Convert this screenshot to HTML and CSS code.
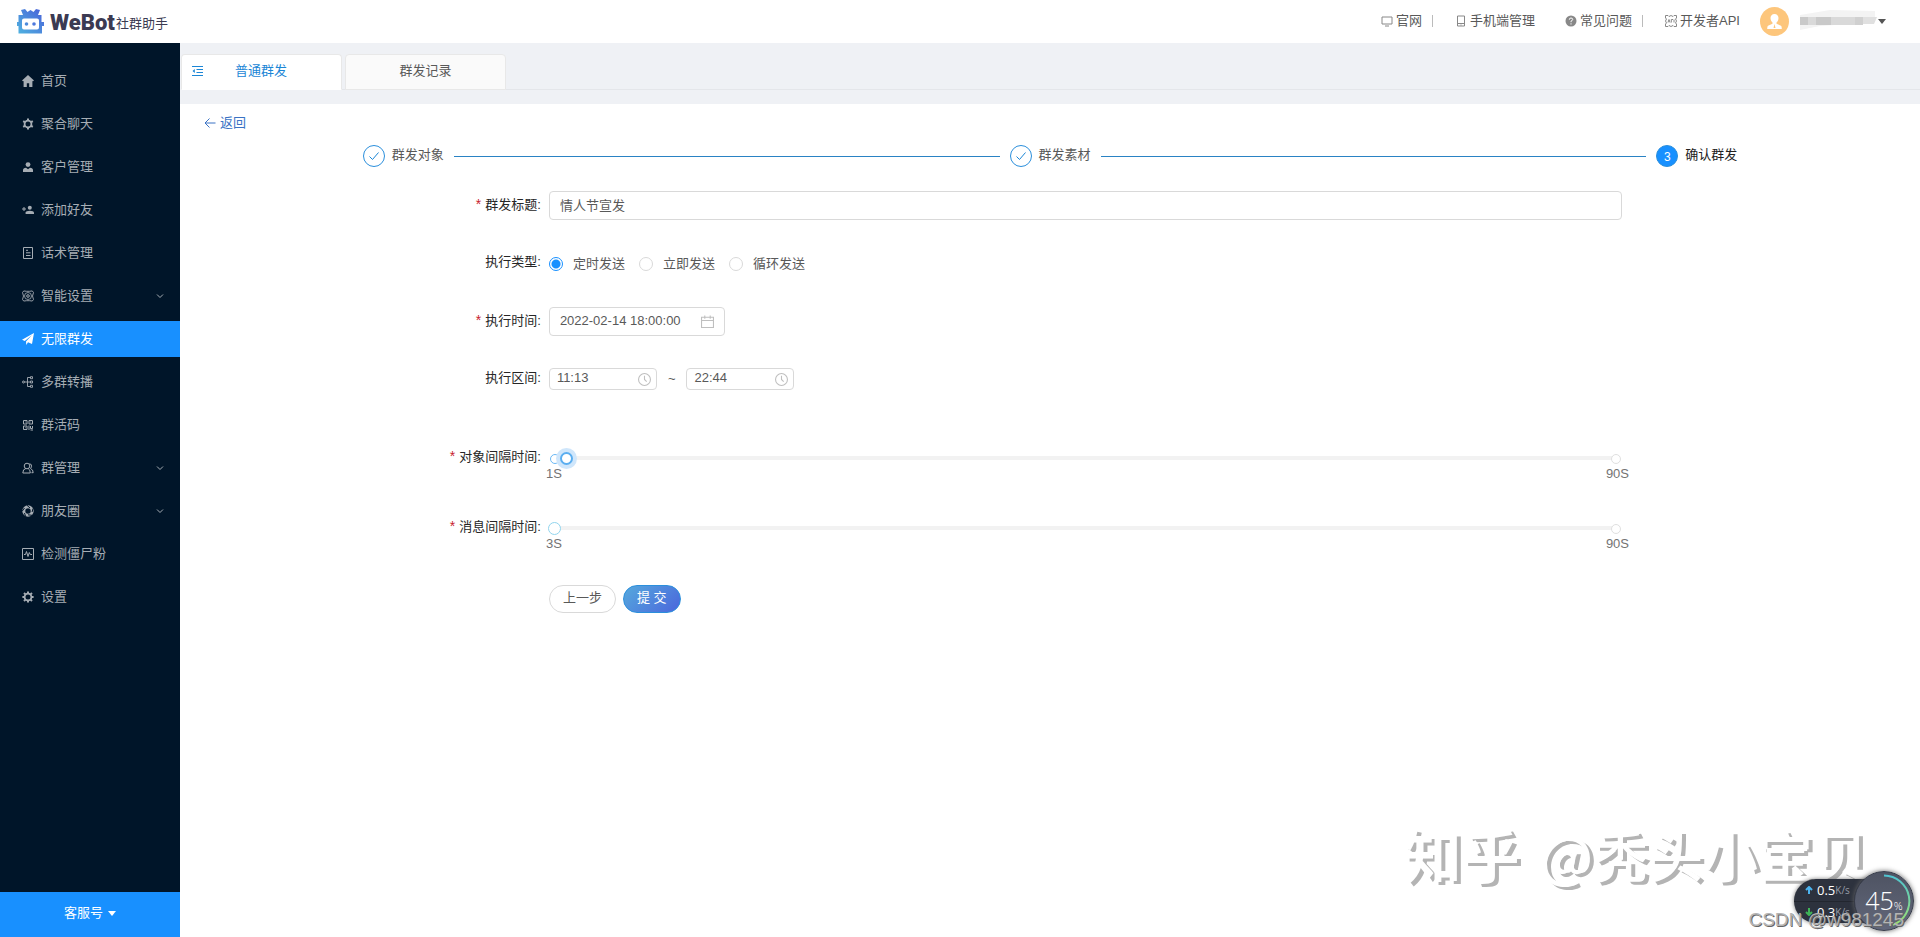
FILE: index.html
```html
<!DOCTYPE html>
<html lang="zh-CN">
<head>
<meta charset="utf-8">
<title>WeBot社群助手</title>
<link rel="stylesheet" href="styles.css">
</head>
<body>
<header class="topbar">
  <a class="logo" href="#">
    <svg class="logo-mark" viewBox="0 0 27 25" aria-hidden="true">
      <defs><linearGradient id="lg" x1="0" y1="1" x2="1" y2="0"><stop offset="0" stop-color="#4fb4e0"/><stop offset="1" stop-color="#4a5fd8"/></linearGradient></defs>
      <path fill="url(#lg)" d="M4 1l4-1 2.500 3L13.500 1l3 2L19 0l4 1-2 5h3.500v7H27v4h-2v7.500H1.500V17H0v-4h1.500V6H6zM7 9.500q-2 0-2 2v7q0 2 2 2h13q2 0 2-2v-7q0-2-2-2z"/>
      <circle cx="9.500" cy="15" r="1.800" fill="#4d8bdc"/><circle cx="17" cy="15" r="1.800" fill="#4d78dc"/>
    </svg>
    <strong class="logo-name">WeBot</strong><span class="logo-sub">社群助手</span>
  </a>
  <nav class="toplinks">
    <a class="toplink ruled" href="#"><svg class="ti" viewBox="0 0 12 12"><path d="M1 2h10v7H1zM4 11h4"/></svg>官网</a>
    <a class="toplink" href="#"><svg class="ti" viewBox="0 0 12 12"><path d="M2.500 1h7v10h-7zM2.500 8.500h7M5.500 10h1"/></svg>手机端管理</a>
    <a class="toplink ruled apart" href="#"><svg class="ti" viewBox="0 0 12 12"><circle cx="6" cy="6" r="5.500" fill="#888" stroke="none"/><path class="inv" d="M4.300 4.700q0-1.700 1.700-1.700t1.700 1.500q0 .9-1.700 1.700v1M6 8.300v1.200"/></svg>常见问题</a>
    <a class="toplink" href="#"><svg class="ti" viewBox="0 0 12 12"><path d="M.5 3V.5H3L4 1.500 6 .5l2 1 1-1h2.500V3l-1 1 1 2-1 2 1 1v2.500H9l-1-1-2 1-2-1-1 1H.5V9l1-1-1-2 1-2zM3 7.500l1-3 1 3M6.300 7.500v-3H8M9 4.500v3"/></svg>开发者API</a>
  </nav>
  <button class="account" aria-label="账户">
    <svg class="avatar" viewBox="0 0 29 29"><circle cx="14.500" cy="14.500" r="14.500" fill="#fdc67c"/><path fill="#fff" d="M14.500 7c2.500 0 4 1.700 4 4 0 1.900-1 3.700-2 4.500v1.300l4.500 1.900q.8.500.8 3.300H7.200q0-2.800.8-3.300l4.500-1.900v-1.300c-1-.8-2-2.600-2-4.500 0-2.300 1.500-4 4-4z"/><path d="M14.500 17l-1 4h2z" fill="#fdc67c"/></svg>
    <svg class="masked" viewBox="0 0 78 24"><path fill="#f3f3f3" d="M0 6l30-5 45 1v8l-10 4-45 3-20 4z"/><path fill="#c9c9c9" d="M0 8h8v8H0zM16 8h15v8H16z"/><path fill="#d9d9d9" d="M8 8h8v8H8zM31 8h24v8H31z"/><path fill="#d0d0d0" d="M55 8h8v8h-8z"/><path fill="#e0e0e0" d="M63 8h14l-3 7H63z"/></svg>
    <svg class="caret" viewBox="0 0 8 5"><path d="M0 0h8L4 5z" fill="#555"/></svg>
  </button>
</header>
<div class="shell">
  <aside class="side">
    <nav class="menu">
      <a class="mi" href="#"><svg class="ic" viewBox="0 0 12 12"><path class="f" d="M6 0l6 5.500-1 .8-.6-.4V12H7.200V8.300H4.800V12H1.600V5.900l-.6.4-1-.8z"/></svg>首页</a>
      <a class="mi" href="#"><svg class="ic" viewBox="0 0 12 12"><circle cx="6" cy="6" r="3.400" stroke-width="1.800"/><path stroke-width="2" d="M6 .4v2M6 9.600v2M1.200 3.200l1.600 1M9.200 7.800l1.600 1M1.200 8.800l1.600-1M9.200 4.200l1.600-1"/></svg>聚合聊天</a>
      <a class="mi" href="#"><svg class="ic" viewBox="0 0 12 12"><circle class="f" cx="6" cy="3.600" r="2.400"/><path class="f" d="M1 11V9q0-2 3-2.300L6 8.300l2-1.600q3 .3 3 2.300v2z"/></svg>客户管理</a>
      <a class="mi" href="#"><svg class="ic" viewBox="0 0 12 12"><circle class="f" cx="7.800" cy="3.700" r="2"/><path class="f" d="M3.600 10V8.600Q4 6.700 7.800 6.700T12 8.600V10z"/><path d="M2 3v4M0 5h4"/></svg>添加好友</a>
      <a class="mi" href="#"><svg class="ic" viewBox="0 0 12 12"><path d="M1.500.5h9v11h-9zM4 3.300h2M4 5.800h4.500M4 8.500h4.500"/></svg>话术管理</a>
      <a class="mi" href="#"><svg class="ic" viewBox="0 0 12 12"><circle cx="6" cy="6" r="1.300"/><circle cx="6" cy="6" r="3.500" stroke-width=".8"/><path stroke-width=".9" d="M4.500 1.300Q1 0 .5 2.500L1.500 6 .5 9.500Q1 12 4.500 10.700h3Q11 12 11.500 9.500L10.500 6l1-3.500Q11 0 7.500 1.300z"/></svg>智能设置<svg class="chev" viewBox="0 0 8 8"><path d="M1 2.500l3 3 3-3"/></svg></a>
      <a class="mi on" href="#"><svg class="ic" viewBox="0 0 12 12"><path class="f" d="M12 0l-2 11-4-1.700L4.300 12 4 8.500 10 2 2.800 7.900 0 6.700z"/></svg>无限群发</a>
      <a class="mi" href="#"><svg class="ic" viewBox="0 0 12 12"><circle cx="1.500" cy="6" r="1"/><path stroke-width=".9" d="M2.500 6H8M8.500 1.500h-3v9h3M8.500.7h2v2h-2zM8.500 5h2v2h-2zM8.500 9.300h2v2h-2z"/></svg>多群转播</a>
      <a class="mi" href="#"><svg class="ic" viewBox="0 0 12 12"><path d="M1.500 1.500h3.500v3.500H1.500zM7 1.500h3.500v3.500H7zM1.500 7h3.500v3.500H1.500zM3 3h.6M8.500 3h.6M3 8.700h.6M7 6.500v4.500M8.500 7v2.500h2V7M8.500 11h2.500"/></svg>群活码</a>
      <a class="mi" href="#"><svg class="ic" viewBox="0 0 12 12"><circle cx="5" cy="4" r="2.800"/><path d="M.8 11q0-4 3-4.500M.8 11h7.500q0-3.500-2.200-4.500M7.500 1.700q2.500.3 2 3.100l-1 1.700q2.700 1 2.700 4.200H9.500"/></svg>群管理<svg class="chev" viewBox="0 0 8 8"><path d="M1 2.500l3 3 3-3"/></svg></a>
      <a class="mi" href="#"><svg class="ic" viewBox="0 0 12 12"><circle cx="6" cy="6" r="4.200" stroke-width="3"/><path class="cut" d="M5 .3L8 3M11 3.500l-.9 3.500M10 10.300l-4-.5M3.500 11.300L2.500 8M.3 6l2.200-3"/></svg>朋友圈<svg class="chev" viewBox="0 0 8 8"><path d="M1 2.500l3 3 3-3"/></svg></a>
      <a class="mi" href="#"><svg class="ic" viewBox="0 0 12 12"><path d="M.5.5h11v11H.5zM2 6.500h1.500l1-3 1.500 5 1.300-4 1 2H10"/></svg>检测僵尸粉</a>
      <a class="mi" href="#"><svg class="ic" viewBox="0 0 12 12"><circle cx="6" cy="6" r="3.400" stroke-width="1.800"/><path stroke-width="2" d="M6 .4v2M6 9.600v2M.4 6h2M9.600 6h2M2 2l1.400 1.400M8.600 8.600L10 10M2 10l1.400-1.400M8.600 3.400L10 2"/></svg>设置</a>
    </nav>
    <button class="service">客服号<svg class="caret" viewBox="0 0 8 5"><path d="M0 0h8L4 5z" fill="#fff"/></svg></button>
  </aside>
  <main class="main">
    <div class="tabs">
      <button class="tab cur"><svg class="fold" viewBox="0 0 12 12"><path d="M0 1.500h11M4.500 4.500H11M4.500 7.500H11M0 10.500h11"/><path class="tri" d="M2.800 4v4L.5 6z"/></svg>普通群发</button>
      <button class="tab">群发记录</button>
    </div>
    <section class="panel">
      <a class="back" href="#"><svg class="arrow" viewBox="0 0 12 12"><path d="M11.500 6H1M5.500 1.500L1 6l4.500 4.500"/></svg>返回</a>
      <ol class="steps">
        <li class="step"><span class="dot"><svg viewBox="0 0 12 12"><path d="M1.500 6.500l3 3 6-7"/></svg></span><span class="name">群发对象</span></li>
        <li class="step"><span class="dot"><svg viewBox="0 0 12 12"><path d="M1.500 6.500l3 3 6-7"/></svg></span><span class="name">群发素材</span></li>
        <li class="step now"><span class="dot">3</span><span class="name">确认群发</span></li>
      </ol>
      <form class="form">
        <label class="lab req" for="title">群发标题:</label>
        <input class="box" id="title" value="情人节宣发">

        <span class="lab">执行类型:</span>
        <div class="radios">
          <label class="radio"><input type="radio" name="mode" checked>定时发送</label>
          <label class="radio"><input type="radio" name="mode">立即发送</label>
          <label class="radio"><input type="radio" name="mode">循环发送</label>
        </div>

        <label class="lab req" for="when">执行时间:</label>
        <div class="picker date"><input id="when" value="2022-02-14 18:00:00"><svg viewBox="0 0 12 12"><path d="M.5 2h11v9.500H.5zM.5 5h11M3.500.5v3M8.500.5v3"/></svg></div>

        <label class="lab" for="from">执行区间:</label>
        <div class="span">
          <div class="picker"><input id="from" value="11:13"><svg viewBox="0 0 12 12"><circle cx="6" cy="6" r="5.500"/><path d="M6 2.500V6l2 2"/></svg></div>
          <span>~</span>
          <div class="picker"><input aria-label="结束时间" value="22:44"><svg viewBox="0 0 12 12"><circle cx="6" cy="6" r="5.500"/><path d="M6 2.500V6l2 2"/></svg></div>
        </div>

        <label class="lab req slid first" for="gap1">对象间隔时间:</label>
        <div class="slider first active">
          <div class="bar"><div class="rail"><i class="fill"></i></div><input id="gap1" type="range" min="1" max="90" value="2"></div>
          <div class="marks"><span>1S</span><span>90S</span></div>
        </div>

        <label class="lab req slid" for="gap2">消息间隔时间:</label>
        <div class="slider">
          <div class="bar"><div class="rail"></div><input id="gap2" type="range" min="3" max="90" value="3"></div>
          <div class="marks"><span>3S</span><span>90S</span></div>
        </div>

        <div class="actions"><button type="button" class="btn">上一步</button><button type="button" class="btn primary">提 交</button></div>
      </form>
    </section>
  </main>
</div>
<div class="mark-big"><span class="site">知乎</span><span>@秃头小宝贝</span></div>
<div class="net">
  <div class="rates">
    <div class="rate"><svg class="up" viewBox="0 0 8 8"><path d="M4 8V1M1 4l3-3 3 3"/></svg><span>0.5</span><small>K/s</small></div>
    <div class="rate"><svg class="down" viewBox="0 0 8 8"><path d="M4 0v7M1 4l3 3 3-3"/></svg><span>0.3</span><small>K/s</small></div>
  </div>
  <div class="gauge"><svg viewBox="0 0 60 60"><defs><linearGradient id="arc" x1="0" y1="0" x2="0" y2="1"><stop offset="0" stop-color="#4fc3d0"/><stop offset="1" stop-color="#9be070"/></linearGradient></defs><path d="M30 4.500a25.500 25.500 0 0 1 9 49.300" fill="none" stroke="url(#arc)" stroke-width="2"/></svg><span>45</span><small>%</small></div>
</div>
<div class="mark-small">CSDN @w981245</div>
</body>
</html>
```
FILE: styles.css
```css
* { box-sizing: border-box; }
body {
  margin: 0;
  min-height: 100vh;
  display: flex;
  flex-direction: column;
  background: #fff;
  color: #595959;
  font: 13px/20px "Liberation Sans", "Noto Sans CJK SC", sans-serif;
}
a { color: inherit; text-decoration: none; }
button, input { font: inherit; color: inherit; }
button { border: 0; background: none; padding: 0; cursor: pointer; }
svg { flex: none; fill: none; stroke: currentColor; }

.topbar { height: 43px; display: flex; align-items: center; padding: 0 34px 1px 17px; }
.logo { display: flex; align-items: center; margin-right: auto; color: #3b3a52; }
.logo-mark { width: 27px; height: 25px; stroke: none; }
.logo-name { margin: 4px 1px 0 6px; font: 900 22px/24px Roboto, sans-serif; }
.logo-sub { margin-top: 6px; }
.toplinks { display: flex; align-items: center; }
.toplink { display: flex; align-items: center; gap: 3px; line-height: 12px; margin-left: 22px; white-space: nowrap; }
.toplink.apart { margin-left: 30px; }
.ruled { border-right: 1px solid #bbb; padding-right: 10px; }
.ti { width: 12px; height: 12px; color: #888; }
.ti .inv { stroke: #fff; }
.account { display: flex; align-items: center; margin-left: 20px; }
.avatar { width: 29px; height: 29px; stroke: none; }
.masked { width: 78px; height: 24px; margin-left: 11px; stroke: none; }
.caret { width: 8px; height: 5px; stroke: none; }

.shell { flex: 1; display: flex; }
.side { width: 180px; flex: none; display: flex; flex-direction: column; background: #001529; color: #a6adb4; }
.menu { flex: 1; display: flex; flex-direction: column; gap: 7px; padding-top: 20px; }
.mi { height: 36px; display: flex; align-items: center; gap: 7px; padding: 0 16px 0 22px; }
.mi.on { background: #1890ff; color: #fff; }
.ic { width: 12px; height: 12px; }
.ic .f { fill: currentColor; stroke: none; }
.ic .cut { stroke: #001529; stroke-width: 1; }
.chev { width: 8px; height: 8px; margin-left: auto; }
.service { height: 45px; padding-bottom: 3px; background: #1890ff; color: #fff; display: flex; align-items: center; justify-content: center; gap: 5px; }

.main { flex: 1; min-width: 0; display: flex; flex-direction: column; background: #eff1f5; }
.tabs { display: flex; gap: 3px; margin: 11px 0 14px 1px; height: 36px; box-shadow: inset 0 -1px #e4e6ea; }
.tab { width: 161px; border: 1px solid #e8e8e8; border-radius: 4px 4px 0 0; background: #fafafa; display: flex; align-items: center; justify-content: center; padding-bottom: 2px; }
.tab.cur { background: #fff; border-bottom-color: #fff; color: #1b86d6; justify-content: flex-start; gap: 31px; padding-left: 10px; }
.fold { width: 12px; height: 12px; }
.fold .tri { fill: currentColor; stroke: none; }

.panel { flex: 1; background: #fff; padding-top: 9px; }
.back { display: flex; width: max-content; align-items: center; gap: 4px; margin-left: 24px; color: #3a72c4; }
.arrow { width: 12px; height: 12px; }
.steps { display: flex; gap: 10px; width: 79%; margin: 12px auto 0; padding: 0; list-style: none; line-height: 22px; }
.step { display: flex; align-items: center; gap: 7px; white-space: nowrap; }
.step:not(.now) { flex: 1; }
.step:not(.now)::after { content: ""; flex: 1; height: 1px; margin-left: 3px; background: #2a83c4; }
.name { padding-bottom: 3px; line-height: 19px; }
.dot { width: 22px; height: 22px; display: grid; place-items: center; border: 1px solid #2b8fdc; border-radius: 50%; color: #1b86d6; font-size: 12px; }
.dot svg { width: 12px; height: 12px; }
.now { color: #222; }
.now .dot { background: #1890ff; color: #fff; }

.form { display: grid; grid-template-columns: 21.2% 61.7%; row-gap: 29px; margin-top: 24px; align-items: center; }
.lab { justify-self: end; padding-right: 8px; margin-top: -3px; color: #262626; }
.req::before { content: "*"; color: #c8202f; margin-right: 4px; font-size: 14px; }
.box, .picker { height: 29px; border: 1px solid #d9d9d9; border-radius: 4px; background: #fff; }
.box { width: 100%; padding: 0 10px 2px; }
.radios { display: flex; gap: 14px; height: 29px; }
.radio { display: flex; align-items: center; gap: 10px; }
.radio input { appearance: none; width: 14px; height: 14px; margin: 0; border: 1px solid #d9d9d9; border-radius: 50%; }
.radio input:checked { border-color: #1890ff; background: radial-gradient(circle, #1890ff 4px, #fff 5px); }
.picker { display: flex; align-items: center; width: 108px; height: 22px; padding: 0 5px 0 7px; }
.picker input { flex: 1; min-width: 0; border: 0; padding: 0 0 2px; background: none; outline: 0; }
.picker svg { width: 13px; height: 13px; color: #bfbfbf; }
.picker.date { width: 176px; height: 29px; padding: 0 10px; }
.span { display: flex; align-items: center; gap: 11px; height: 29px; padding-bottom: 1px; }

.slid { align-self: start; margin-top: 3px; }
.slid.first { margin-top: 23px; }
.slider { margin: 0 -1px; }
.slider.first { margin-top: 20px; }
.bar { position: relative; height: 30px; display: flex; align-items: center; }
.rail { position: absolute; left: 6px; right: 6px; height: 4px; background: #f2f2f2; }
.rail::before, .rail::after { content: ""; position: absolute; top: -2px; width: 8px; height: 8px; border: 1px solid #e0e0e0; border-radius: 50%; background: #fff; }
.rail::before { left: -4px; }
.rail::after { right: -4px; }
.active .rail::before { border-color: #69b8f5; }
.fill { display: block; width: 1%; height: 4px; background: #69b8f5; }
.bar input { position: relative; appearance: none; width: 100%; height: 14px; margin: 0; background: none; }
.bar input::-webkit-slider-thumb { appearance: none; width: 13px; height: 13px; border: 1px solid #91d5ee; border-radius: 50%; background: #fff; }
.active input::-webkit-slider-thumb { border: 2px solid #5aaef0; box-shadow: 0 0 0 4px #cfe6fb; }
.marks { display: flex; justify-content: space-between; height: 20px; margin: -9px -6px 0; color: #737373; }
.marks span { width: 24px; text-align: center; }
.actions { grid-column: 2; display: flex; gap: 7px; margin-top: 2px; }
.btn { height: 28px; padding: 0 13px 2px; border: 1px solid #d9d9d9; border-radius: 14px; background: #fff; line-height: 20px; }
.primary { border-color: #2b8fdc; background: linear-gradient(135deg, #55a9dd, #4b66dc); color: #fff; }

.mark-big { position: absolute; right: 52px; bottom: 52px; display: flex; align-items: center; gap: 20px; color: #fff; font: 500 55px/64px "Noto Sans CJK SC", sans-serif; text-shadow: 4px 3px #b4b4b4; white-space: nowrap; }
.site { font-size: 58px; font-weight: 700; }
.net { position: absolute; right: 6px; bottom: 6px; display: flex; align-items: center; color: #fff; }
.rates { width: 90px; margin-right: -30px; border-radius: 22px 0 0 22px; background: #2d323e; box-shadow: 0 0 4px #777; }
.rate { display: flex; align-items: center; height: 22px; padding-left: 11px; font: 13px/20px "Open Sans", sans-serif; }
.rate + .rate { border-top: 1px solid #22262f; padding-bottom: 2px; }
.rate svg { width: 8px; height: 8px; margin-right: 4px; stroke-width: 2; }
.rate small { font-size: 10px; color: #969ba5; }
.up { color: #4cb4f0; }
.down { color: #3fb558; }
.gauge { position: relative; width: 60px; height: 60px; display: flex; align-items: baseline; justify-content: center; border: 1px solid #383d4a; border-radius: 50%; background: linear-gradient(#4e5362, #62677a); box-shadow: 0 0 5px #666; font: 300 25px/56px "Open Sans", sans-serif; }
.gauge svg { position: absolute; inset: -1px; width: 60px; height: 60px; }
.gauge small { font-size: 11px; }
.mark-small { position: absolute; right: 16px; bottom: 5px; color: #b4b4b4; font: 19px/24px "Liberation Sans", sans-serif; text-shadow: 1px 1px #666; white-space: nowrap; }
```
